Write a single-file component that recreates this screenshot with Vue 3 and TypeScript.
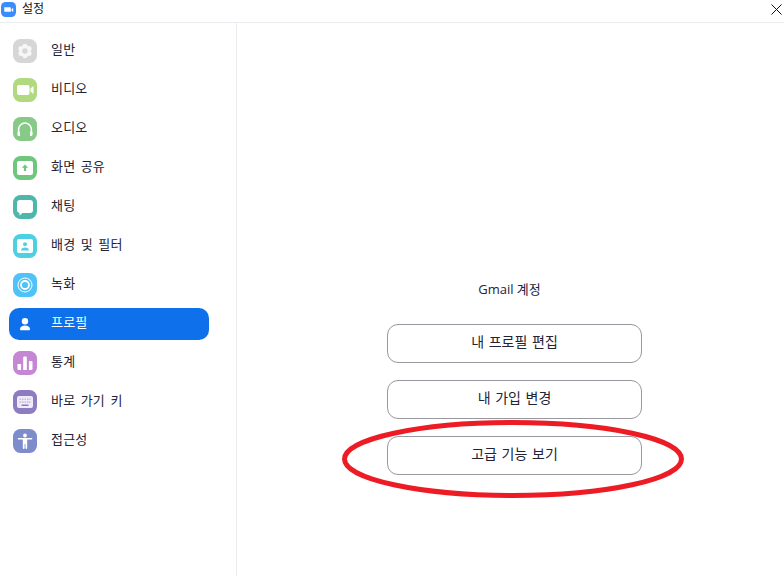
<script setup lang="ts">
type Shape = {
  d: string
  fill?: string
  stroke?: string
  width?: number
}

type Item = {
  label: string
  color: string
  shapes: Shape[]
  active?: boolean
}

function circle(cx: number, cy: number, r: number): string {
  return `M${cx - r} ${cy}a${r} ${r} 0 1 0 ${r * 2} 0a${r} ${r} 0 1 0 ${-r * 2} 0z`
}

// six lobes round the middle of the gear
const lobes = [0, 60, 120, 180, 240, 300]
  .map((deg) => {
    const rad = ((deg + 30) * Math.PI) / 180
    return circle(12 + 4.6 * Math.cos(rad), 12 + 4.6 * Math.sin(rad), 2.6)
  })
  .join('')

const items: Item[] = [
  {
    label: '일반',
    color: '#d6d6d6',
    shapes: [
      { d: lobes, fill: '#f6f6f6' },
      { d: circle(12, 12, 5.4), fill: '#f6f6f6' },
      { d: circle(12, 12, 2.7), fill: '#d6d6d6' },
    ],
  },
  {
    label: '비디오',
    color: '#b1d97f',
    shapes: [
      { d: 'M6 7h8.5a2 2 0 0 1 2 2v6a2 2 0 0 1-2 2H6a2 2 0 0 1-2-2V9a2 2 0 0 1 2-2z', fill: '#fff' },
      { d: 'M17.5 10.6 20.5 8v8l-3-2.6z', fill: '#fff' },
    ],
  },
  {
    label: '오디오',
    color: '#87c987',
    shapes: [
      { d: 'M5.6 17v-4.5a6.4 6.4 0 0 1 12.8 0V17', stroke: '#fff', width: 1.5 },
      { d: 'M5 14.5h2V19H6a1.5 1.5 0 0 1-1.5-1.5v-2A1 1 0 0 1 5 14.5z', fill: '#fff' },
      { d: 'M17 14.5h2a1 1 0 0 1 .5 1v2A1.5 1.5 0 0 1 18 19h-1z', fill: '#fff' },
    ],
  },
  {
    label: '화면 공유',
    color: '#6fc67d',
    shapes: [
      { d: 'M6 5h12a2 2 0 0 1 2 2v10a2 2 0 0 1-2 2H6a2 2 0 0 1-2-2V7a2 2 0 0 1 2-2z', fill: '#fff' },
      { d: 'M12 8.5l3.2 3.3h-2.1V15h-2.2v-3.2H8.8z', fill: '#6fc67d' },
    ],
  },
  {
    label: '채팅',
    color: '#4fb6ab',
    shapes: [
      {
        d: 'M7 5h10a3 3 0 0 1 3 3v7a3 3 0 0 1-3 3H9.5L6.5 20.5V18A3 3 0 0 1 4 15V8a3 3 0 0 1 3-3z',
        fill: '#fff',
      },
    ],
  },
  {
    label: '배경 및 필터',
    color: '#4dd0e1',
    shapes: [
      { d: 'M6 5h12a2 2 0 0 1 2 2v10a2 2 0 0 1-2 2H6a2 2 0 0 1-2-2V7a2 2 0 0 1 2-2z', fill: '#fff' },
      { d: 'M12 8.2a2 2 0 1 0 0 4 2 2 0 0 0 0-4zM8 16.5c0-2 1.8-3 4-3s4 1 4 3z', fill: '#4dd0e1' },
    ],
  },
  {
    label: '녹화',
    color: '#4fc3f7',
    shapes: [
      { d: circle(12, 12, 7), stroke: '#fff', width: 1 },
      { d: circle(12, 12, 4), stroke: '#fff', width: 1.8 },
    ],
  },
  {
    label: '프로필',
    color: 'transparent',
    active: true,
    shapes: [
      { d: 'M12 6a3.2 3.2 0 1 0 0 6.4A3.2 3.2 0 0 0 12 6z', fill: '#fff' },
      { d: 'M7 17.2c0-2.6 2.3-3.8 5-3.8s5 1.2 5 3.8c0 .6-.4 1-1 1H8c-.6 0-1-.4-1-1z', fill: '#fff' },
    ],
  },
  {
    label: '통계',
    color: '#c586d3',
    shapes: [
      {
        d: 'M4.5 13h3.6v6H5.5a1 1 0 0 1-1-1zM10.2 6.5a1 1 0 0 1 1-1h1.6a1 1 0 0 1 1 1V19h-3.6zM15.9 10h2.6a1 1 0 0 1 1 1v7a1 1 0 0 1-1 1h-2.6z',
        fill: '#fff',
      },
    ],
  },
  {
    label: '바로 가기 키',
    color: '#8e7cc3',
    shapes: [
      { d: 'M6 6h12a2 2 0 0 1 2 2v8a2 2 0 0 1-2 2H6a2 2 0 0 1-2-2V8a2 2 0 0 1 2-2z', fill: '#efecf8' },
      {
        d: 'M8.5 14.5h7V16h-7z',
        fill: '#8e7cc3',
      },
      {
        d: 'M6.5 8.5h1.6v1.6H6.5zM9 8.5h1.6v1.6H9zM11.5 8.5h1.6v1.6h-1.6zM14 8.5h1.6v1.6H14zM16.2 8.5h1.4v1.6h-1.4zM6.5 11.3h1.6v1.6H6.5zM9 11.3h1.6v1.6H9zM11.5 11.3h1.6v1.6h-1.6zM14 11.3h1.6v1.6H14zM16.2 11.3h1.4v1.6h-1.4z',
        fill: '#c9c0e4',
      },
    ],
  },
  {
    label: '접근성',
    color: '#7e8ccb',
    shapes: [
      { d: 'M12 4.6a1.9 1.9 0 1 0 0 3.8 1.9 1.9 0 0 0 0-3.8z', fill: '#fff' },
      {
        d: 'M5.5 9h13a.8.8 0 0 1 0 1.6h-4.3V19a.9.9 0 0 1-1.8 0v-4h-.8v4a.9.9 0 0 1-1.8 0v-8.4H5.5a.8.8 0 0 1 0-1.6z',
        fill: '#fff',
      },
    ],
  },
]

const buttons = ['내 프로필 편집', '내 가입 변경', '고급 기능 보기']
</script>

<template>
  <div class="window">
    <header class="titlebar">
      <svg class="app-icon" viewBox="0 0 16 16" width="15" height="15">
        <rect width="16" height="16" rx="5" fill="#3a8dff" />
        <path d="M3.5 5.5h6a1 1 0 0 1 1 1v4h-6a1 1 0 0 1-1-1z" fill="#fff" />
        <path d="M11.2 7.6 13 6v4.6l-1.8-1.4z" fill="#fff" />
      </svg>
      <span class="title">설정</span>
      <svg class="close" viewBox="0 0 11 11" width="11" height="11">
        <path d="M.5.5l10 10M10.5.5l-10 10" stroke="#111" stroke-width="1" fill="none" />
      </svg>
    </header>
    <div class="body">
      <nav class="sidebar">
        <div v-for="item in items" :key="item.label" class="row" :class="{ 'is-active': item.active }">
          <svg class="icon" viewBox="0 0 24 24" width="24" height="24">
            <rect width="24" height="24" rx="7.5" :fill="item.color" />
            <path
              v-for="shape in item.shapes"
              :key="shape.d"
              :d="shape.d"
              :fill="shape.fill || 'none'"
              :stroke="shape.stroke || 'none'"
              :stroke-width="shape.width || 0"
            />
          </svg>
          <span class="label">{{ item.label }}</span>
        </div>
      </nav>
      <main class="content">
        <div class="account">Gmail 계정</div>
        <button v-for="text in buttons" :key="text" class="action">{{ text }}</button>
        <svg class="mark" viewBox="0 0 346 78" width="346" height="78">
          <ellipse cx="172" cy="39" rx="168.5" ry="36.5" fill="none" stroke="#ed1c24" stroke-width="5" />
        </svg>
      </main>
    </div>
  </div>
</template>

<style>
html,
body {
  margin: 0;
  background: #fff;
}
</style>

<style scoped>
.window {
  width: 784px;
  height: 576px;
  display: flex;
  flex-direction: column;
  overflow: hidden;
  background: #fff;
  color: #232333;
  font-family: "Open Sans", "Noto Sans CJK KR", sans-serif;
  font-size: 13px;
}

.titlebar {
  height: 23px;
  flex: none;
  display: flex;
  align-items: flex-start;
  padding: 2px 2px 0 1px;
  box-sizing: border-box;
  border-bottom: 1px solid #ebebf0;
}

.title {
  margin-left: 6px;
  font-size: 12px;
  line-height: 14px;
  color: #111;
}

.close {
  margin-left: auto;
  margin-top: 2px;
}

.body {
  flex: 1;
  display: flex;
  min-height: 0;
}

.sidebar {
  width: 237px;
  flex: none;
  box-sizing: border-box;
  padding: 12px 27px 0 9px;
  border-right: 1px solid #ebebf0;
  display: flex;
  flex-direction: column;
  gap: 7px;
}

.row {
  height: 32px;
  flex: none;
  display: flex;
  align-items: center;
  padding-left: 4px;
  border-radius: 10px;
}

.row.is-active {
  background: #0e71eb;
  color: #fff;
}

.icon {
  flex: none;
}

.label {
  margin-left: 14px;
  padding-bottom: 4px;
  line-height: 18px;
  letter-spacing: 0.2px;
  word-spacing: 1.8px;
}

.content {
  flex: 1;
  position: relative;
  display: flex;
  flex-direction: column;
  align-items: flex-start;
  padding: 256px 0 0 150px;
}

.account {
  width: 245px;
  height: 20px;
  line-height: 20px;
  margin-bottom: 25px;
  text-align: center;
  color: #232333;
}

.action {
  width: 255px;
  height: 39px;
  flex: none;
  margin-bottom: 17px;
  padding: 0 0 5px;
  background: #fff;
  border: 1px solid #98989e;
  border-radius: 11px;
  font: inherit;
  font-size: 14px;
  word-spacing: 1px;
  color: #232333;
}

.mark {
  position: absolute;
  left: 104px;
  top: 397px;
}
</style>
